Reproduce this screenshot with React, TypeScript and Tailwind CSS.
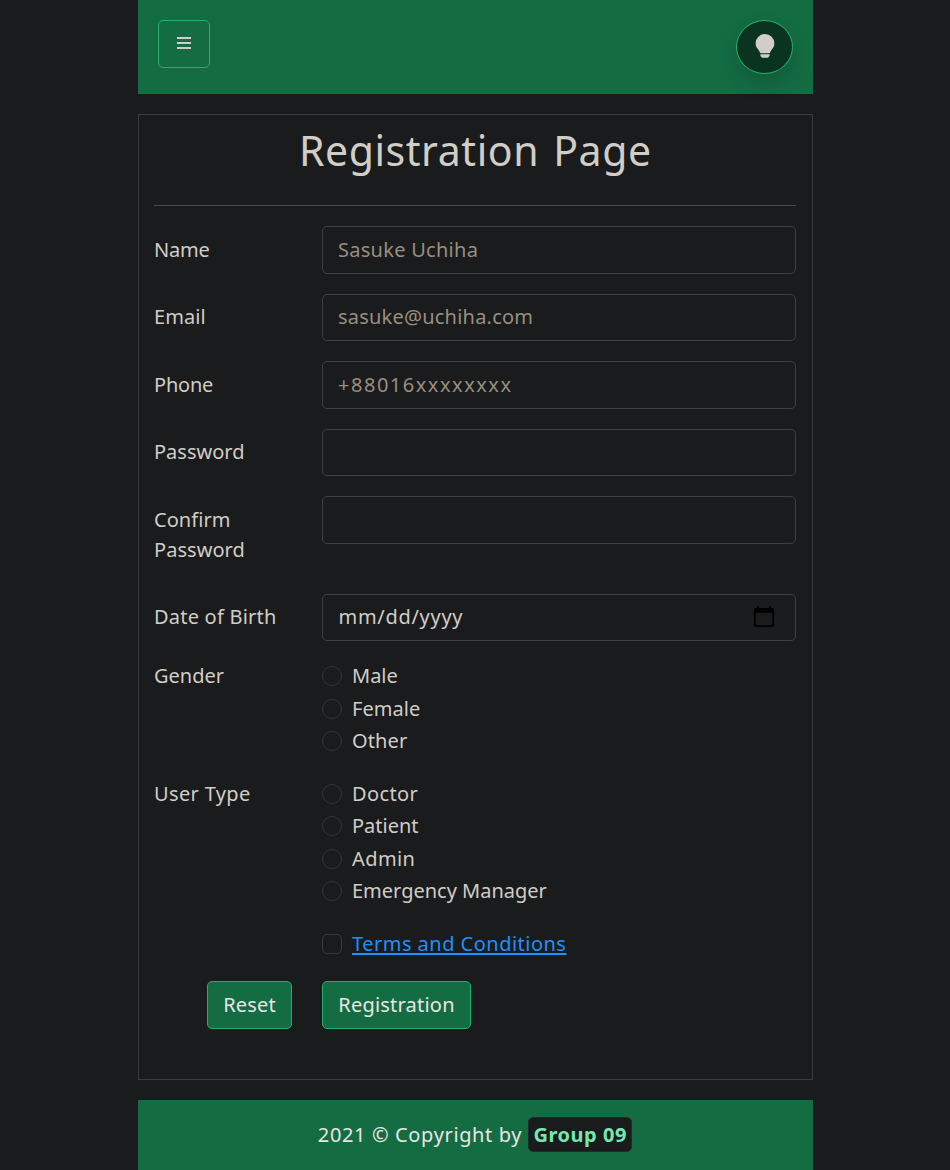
import type { ReactNode } from "react";

const FIELD =
  "block h-[47.5px] w-full rounded-[5px] border border-[#3d4042] bg-transparent px-[15.5px] text-[#d1cdc7] placeholder:text-[#988f81] placeholder:opacity-100 outline-none";

function Row({ label, labelClass = "pt-[8.75px]", children }: { label?: ReactNode; labelClass?: string; children: ReactNode }) {
  return (
    <div className="mb-5 flex">
      <div className={`w-[168px] shrink-0 pl-[0.5px] pr-[29.5px] ${labelClass}`}>{label}</div>
      <div className="min-w-0 flex-1">{children}</div>
    </div>
  );
}

function Radio({ name, label, textClass }: { name: string; label: string; textClass: string }) {
  return (
    <label className="mb-[2.5px] flex h-[30px] items-center gap-[10.5px]">
      <input type="radio" name={name} className="size-5 shrink-0 appearance-none rounded-full border border-[#333531]" />
      <span className={textClass}>{label}</span>
    </label>
  );
}

export default function App() {
  return (
    <div className="h-[1170px] overflow-hidden bg-[#1a1b1c] font-['Noto_Sans','Liberation_Sans',sans-serif] text-[20px] leading-[30px] text-[#d1cdc7]">
      <div className="mx-auto flex w-[675px] flex-col">
        <header className="flex h-[94px] items-start justify-between bg-[#146c43] p-5">
          <button className="flex h-12 w-[52px] items-center justify-center rounded-[5px] border border-[#22b06f]" aria-label="Menu">
            <svg width="14" height="12" viewBox="0 0 14 12" className="-translate-y-px" fill="#d1cdc7">
              <path d="M0 0h14v2H0zM0 5h14v2H0zM0 10h14v2H0z" />
            </svg>
          </button>
          <button
            className="flex h-[54px] w-[57px] items-center justify-center rounded-[50%] border border-[#22b06f] bg-[#0a3420] pl-px shadow-[0_10px_20px_rgba(0,0,0,0.15)]"
            aria-label="Toggle theme"
          >
            <svg width="20" height="26" viewBox="0 0 20 26" className="-translate-y-px" fill="#d1cdc7">
              <path d="M10 .9a9.400 9.400 0 0 0-9.400 9.400c0 2.900 1.200 4.700 2.600 6.300.8 1 1.300 2 1.600 2.700.2.600.6.900 1.200.9h8c.6 0 1-.3 1.200-.9.3-.7.800-1.700 1.600-2.700 1.400-1.600 2.600-3.400 2.600-6.300A9.400 9.400 0 0 0 10 .9zM5.400 21.200h9.200v1.400c0 .5-.3.9-.8 1.100-.4.800-.9 1.100-1.700 1.100H7.900c-.8 0-1.300-.3-1.700-1.100-.5-.2-.8-.6-.8-1.100z" />
            </svg>
          </button>
        </header>

        <main className="mt-5 h-[966px] border border-[#3a3d3f] bg-[#1a1b1c] pl-[15px] pr-4">
          <h1 className="flex h-[90px] items-start justify-center pt-[10px] text-[41px] leading-[50px]">
            <span className="pl-[1.5px] tracking-[0.55px] [word-spacing:3px]">Registration Page</span>
          </h1>
          <hr className="mb-5 border-t border-[#47494b]" />
          <form>
            <Row label={<span className="tracking-[-0.2px]">Name</span>}>
              <input className={`${FIELD} tracking-[0.27px]`} placeholder="Sasuke Uchiha" />
            </Row>
            <Row label={<span className="tracking-[0.1px]">Email</span>}>
              <input className={`${FIELD} pb-px tracking-[0.22px]`} placeholder="sasuke@uchiha.com" />
            </Row>
            <Row label={<span className="tracking-[-0.2px]">Phone</span>}>
              <input className={`${FIELD} tracking-[1.52px]`} placeholder="+88016xxxxxxxx" />
            </Row>
            <Row label={<span>Password</span>}>
              <input type="password" className={FIELD} />
            </Row>
            <Row label={<span className="tracking-[0.05px]">Confirm Password</span>} labelClass="py-[8.75px]">
              <input type="password" className={FIELD} />
            </Row>
            <Row label={<span className="tracking-[0.22px]">Date of Birth</span>}>
              <div className={`${FIELD} flex! items-center justify-between`}>
                <span className="pl-[0.5px] tracking-[0.7px]">mm/dd/yyyy</span>
                <svg width="20" height="22" viewBox="0 0 20 22" className="mr-[5.5px]" fill="#000">
                  <path
                    fillRule="evenodd"
                    d="M3 0h2v2h10V0h2v2h1.500a1.500 1.500 0 0 1 1.500 1.500v16a1.500 1.500 0 0 1-1.500 1.500h-17A1.500 1.500 0 0 1 0 19.500v-16A1.500 1.500 0 0 1 1.500 2H3zM1.700 6.700v12.600h16.600V6.700z"
                  />
                </svg>
              </div>
            </Row>
            <Row label={<span>Gender</span>} labelClass="">
              <Radio name="gender" label="Male" textClass="" />
              <Radio name="gender" label="Female" textClass="tracking-[0.05px]" />
              <Radio name="gender" label="Other" textClass="tracking-[0.1px]" />
            </Row>
            <Row label={<span className="tracking-[0.35px]">User Type</span>} labelClass="">
              <Radio name="type" label="Doctor" textClass="tracking-[0.4px]" />
              <Radio name="type" label="Patient" textClass="" />
              <Radio name="type" label="Admin" textClass="tracking-[0.4px]" />
              <Radio name="type" label="Emergency Manager" textClass="" />
            </Row>
            <Row labelClass="">
              <div className="mb-[2.5px] flex h-[30px] items-center gap-[10px]">
                <input type="checkbox" className="size-5 shrink-0 appearance-none rounded-[5px] border border-[#3a3a36]" />
                <a className="relative left-[0.5px] tracking-[0.48px] text-[#1e90ff] underline decoration-2 underline-offset-2 [text-decoration-skip-ink:none]">
                  Terms and Conditions
                </a>
              </div>
            </Row>
            <div className="flex gap-[30px] pl-[53px]">
              <button type="reset" className="h-[47.5px] w-[85px] rounded-[5px] border border-[#22b06f] bg-[#146c43] pl-px tracking-[0.15px] text-[#e8e6e3]">
                Reset
              </button>
              <button type="button" className="h-[47.5px] w-[149px] rounded-[5px] border border-[#22b06f] bg-[#146c43] pl-px tracking-[0.22px] text-[#e8e6e3]">
                Registration
              </button>
            </div>
          </form>
        </main>

        <footer className="mt-5 flex h-[70px] items-center justify-center gap-[6px] bg-[#146c43] text-[#e8e6e3]">
          <span className="tracking-[0.64px]">2021 © Copyright by</span>
          <b className="mb-px flex h-[35px] w-[104px] items-center justify-center rounded-[5px] border border-[#26292b] bg-[#1a1b1c] pt-px tracking-[0.5px] text-[#75e8b0]">
            Group 09
          </b>
        </footer>
      </div>
    </div>
  );
}
